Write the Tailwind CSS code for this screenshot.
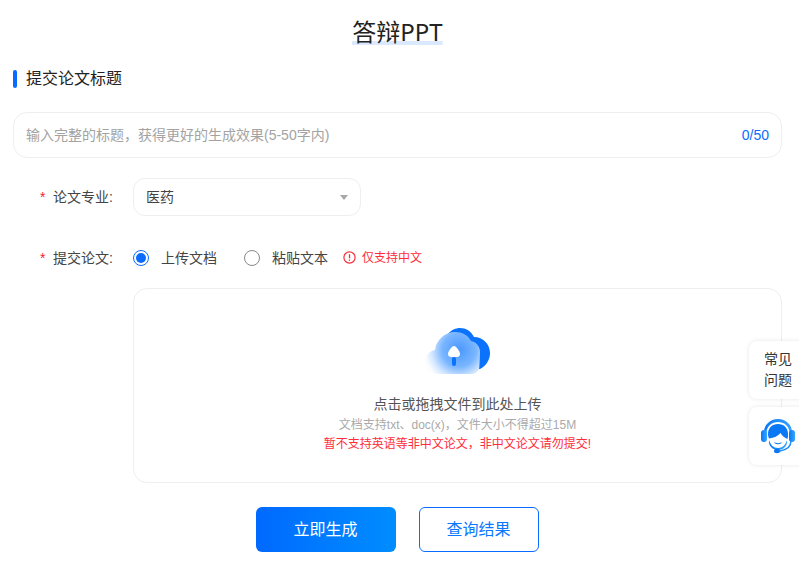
<!DOCTYPE html>
<html lang="zh">
<head>
<meta charset="utf-8">
<title>答辩PPT</title>
<script src="https://cdn.jsdelivr.net/npm/@tailwindcss/browser@4"></script>
</head>
<body class="bg-white overflow-hidden font-['Liberation_Sans','Noto_Sans_CJK_SC',sans-serif]">
<div class="relative h-[569px] w-[799px] overflow-hidden">
  <div class="pl-[13px] w-[782px]">

    <!-- title -->
    <div class="flex justify-center pt-[13px]">
      <h1 class="text-[24px] leading-[37px] h-[32px] text-[#222] font-['Noto_Sans','Noto_Sans_CJK_SC',sans-serif] bg-[linear-gradient(#dbe9ff,#dbe9ff)] bg-no-repeat bg-bottom bg-[length:100%_4px]">答辩PPT</h1>
    </div>

    <!-- section head -->
    <div class="flex items-center mt-[25px] h-[18px]">
      <span class="w-[4px] h-[18px] rounded-[2px] bg-[#0a6cff]"></span>
      <span class="ml-[9px] text-[16px] text-[#222] leading-[20px]">提交论文标题</span>
    </div>

    <!-- title input -->
    <div class="flex items-center justify-between mt-[24px] h-[46px] rounded-[14px] border border-[#eeeeee] pl-[12px] pr-[12px]">
      <span class="text-[14px] text-[#a3a3a3]">输入完整的标题，获得更好的生成效果(5-50字内)</span>
      <span class="text-[14px] text-[#0a6cff]">0/50</span>
    </div>

    <!-- major -->
    <div class="flex items-center mt-[20px] h-[38px]">
      <div class="w-[120px] pl-[27px] flex items-center text-[14px] text-[#444]">
        <span class="text-[#f5222d] w-[13px]">*</span><span>论文专业:</span>
      </div>
      <div class="w-[228px] h-[38px] rounded-[12px] border border-[#eeeeee] flex items-center justify-between pl-[12px] pr-[12px]">
        <span class="text-[14px] text-[#444]">医药</span>
        <span class="w-0 h-0 border-x-[4px] border-x-transparent border-t-[5px] border-t-[#a8a8a8]"></span>
      </div>
    </div>

    <!-- source type -->
    <div class="flex items-center mt-[32px] h-[20px]">
      <div class="w-[120px] pl-[27px] flex items-center text-[14px] text-[#444]">
        <span class="text-[#f5222d] w-[13px]">*</span><span>提交论文:</span>
      </div>
      <span class="w-[16px] h-[16px] rounded-full border border-[#0a6cff] flex items-center justify-center"><span class="w-[10px] h-[10px] rounded-full bg-[#0a6cff]"></span></span>
      <span class="ml-[12px] text-[14px] text-[#444]">上传文档</span>
      <span class="ml-[27px] w-[16px] h-[16px] rounded-full border border-[#888]"></span>
      <span class="ml-[12px] text-[14px] text-[#444]">粘贴文本</span>
      <svg class="ml-[15px] -mt-[1px]" width="13" height="13" viewBox="0 0 13 13" fill="none"><circle cx="6.500" cy="6.500" r="5.600" stroke="#f5323c" stroke-width="1.200"/><path d="M6.500 3.200v4.200" stroke="#f5323c" stroke-width="1.300"/><path d="M6.500 8.500v1.300" stroke="#f5323c" stroke-width="1.300"/></svg>
      <span class="ml-[6px] text-[12px] text-[#ff2d3a]">仅支持中文</span>
    </div>

    <!-- upload box -->
    <div class="ml-[120px] mt-[20px] h-[195px] rounded-[14px] border border-[#eeeeee] flex flex-col items-center">
      <svg class="mt-[39px]" width="66" height="47" viewBox="0 0 66 47">
        <defs>
          <radialGradient id="front" gradientUnits="userSpaceOnUse" cx="34" cy="22" r="34">
            <stop offset="0" stop-color="#4a98ff"/>
            <stop offset="0.5" stop-color="#7ab6ff"/>
            <stop offset="0.8" stop-color="#d3e6ff"/>
            <stop offset="1" stop-color="#fafcff"/>
          </radialGradient>
        </defs>
        <!-- back cloud -->
        <path d="M23 6c3-4 8-6 12-6 6 0 11 3 14 9 9 0 16 7 16 16 0 7-4 13-10 16H34z" fill="#0a72fb"/>
        <!-- front cloud -->
        <path d="M12 46C5 46 0 41 0 34c0-6 4-11 10-12 1-10 10-18 20-18 7 0 13 3 16 9 5 1 9 5 9 11 0 3-.5 16-1 18-2 2-4 4-8 4z" fill="url(#front)"/>
        <!-- arrow -->
        <path d="M29 18c2 0 6 5 6 8 0 2-1.500 3-3 3h-6c-1.500 0-3-1-3-3 0-3 4-8 6-8z" fill="#fff"/>
        <rect x="27" y="29" width="4" height="9" rx="2" fill="#0a72fb"/>
      </svg>
      <p class="mt-[19px] text-[14px] leading-[20px] text-[#555]">点击或拖拽文件到此处上传</p>
      <p class="mt-[2px] text-[12px] leading-[19px] text-[#aaaaaa]">文档支持txt、doc(x)，文件大小不得超过15M</p>
      <p class="text-[12px] leading-[19px] text-[#ff2d3a]">暂不支持英语等非中文论文，非中文论文请勿提交!</p>
    </div>

    <!-- actions -->
    <div class="flex justify-center mt-[24px] pr-[1px] gap-[23px]">
      <button class="w-[140px] h-[45px] pt-[1px] rounded-[6px] bg-gradient-to-r from-[#0069ff] to-[#008dff] text-white text-[16px]">立即生成</button>
      <button class="w-[120px] h-[45px] pt-[1px] rounded-[6px] border border-[#0a6cff] bg-white text-[#0a78ff] text-[16px]">查询结果</button>
    </div>
  </div>

  <!-- floating helpers -->
  <div class="absolute left-[749px] top-[341px] w-[60px] flex flex-col gap-[8px]">
    <div class="h-[58px] rounded-[8px] bg-white shadow-[0_0_4px_rgba(0,0,0,0.10)] pl-[15px] pt-[8px] text-[14px] leading-[21px] text-[#333]">常见<br>问题</div>
    <div class="h-[58px] rounded-[8px] bg-white shadow-[0_0_4px_rgba(0,0,0,0.10)] pl-[12px] pt-[12px]">
      <svg width="34" height="35" viewBox="0 0 34 35">
        <defs>
          <linearGradient id="head" x1="0" y1="0" x2="1" y2="0">
            <stop offset="0" stop-color="#0a78f5"/>
            <stop offset="1" stop-color="#35a5ff"/>
          </linearGradient>
        </defs>
        <!-- band -->
        <path d="M17 0C9 0 3 6 3 13h2.500C6 7 11 3 17 3s11 4 11.500 10H31C31 6 25 0 17 0z" fill="url(#head)"/>
        <!-- ear cups -->
        <rect x="0" y="11" width="6" height="12" rx="3" fill="url(#head)"/>
        <rect x="28" y="11" width="6" height="12" rx="3" fill="url(#head)"/>
        <!-- hair -->
        <path d="M7 15C7 9 11 5 17 5s10 4 10 10c0 2 0 3-.5 5-2.500-1-5.500-3-7-6-2.500 3-6.500 5-11.500 5.500C7.500 18 7 17 7 15z" fill="#0a78f5"/>
        <!-- chin -->
        <path d="M8 21c1.500 5 4.500 8 9 8s7.500-3 9-8c1 6-4 10-9 10s-10-4-9-10z" fill="url(#head)"/>
        <!-- smile -->
        <path d="M13 23c2 1.500 6 1.500 8 0-1 3-7 3-8 0z" fill="#0a78f5"/>
        <!-- mic boom -->
        <path d="M30 22c0 6-5 9-11 10" fill="none" stroke="#1b8cff" stroke-width="1.400"/>
        <ellipse cx="16" cy="32" rx="3" ry="2.200" fill="#0a78f5"/>
      </svg>
    </div>
  </div>
</div>
</body>
</html>
